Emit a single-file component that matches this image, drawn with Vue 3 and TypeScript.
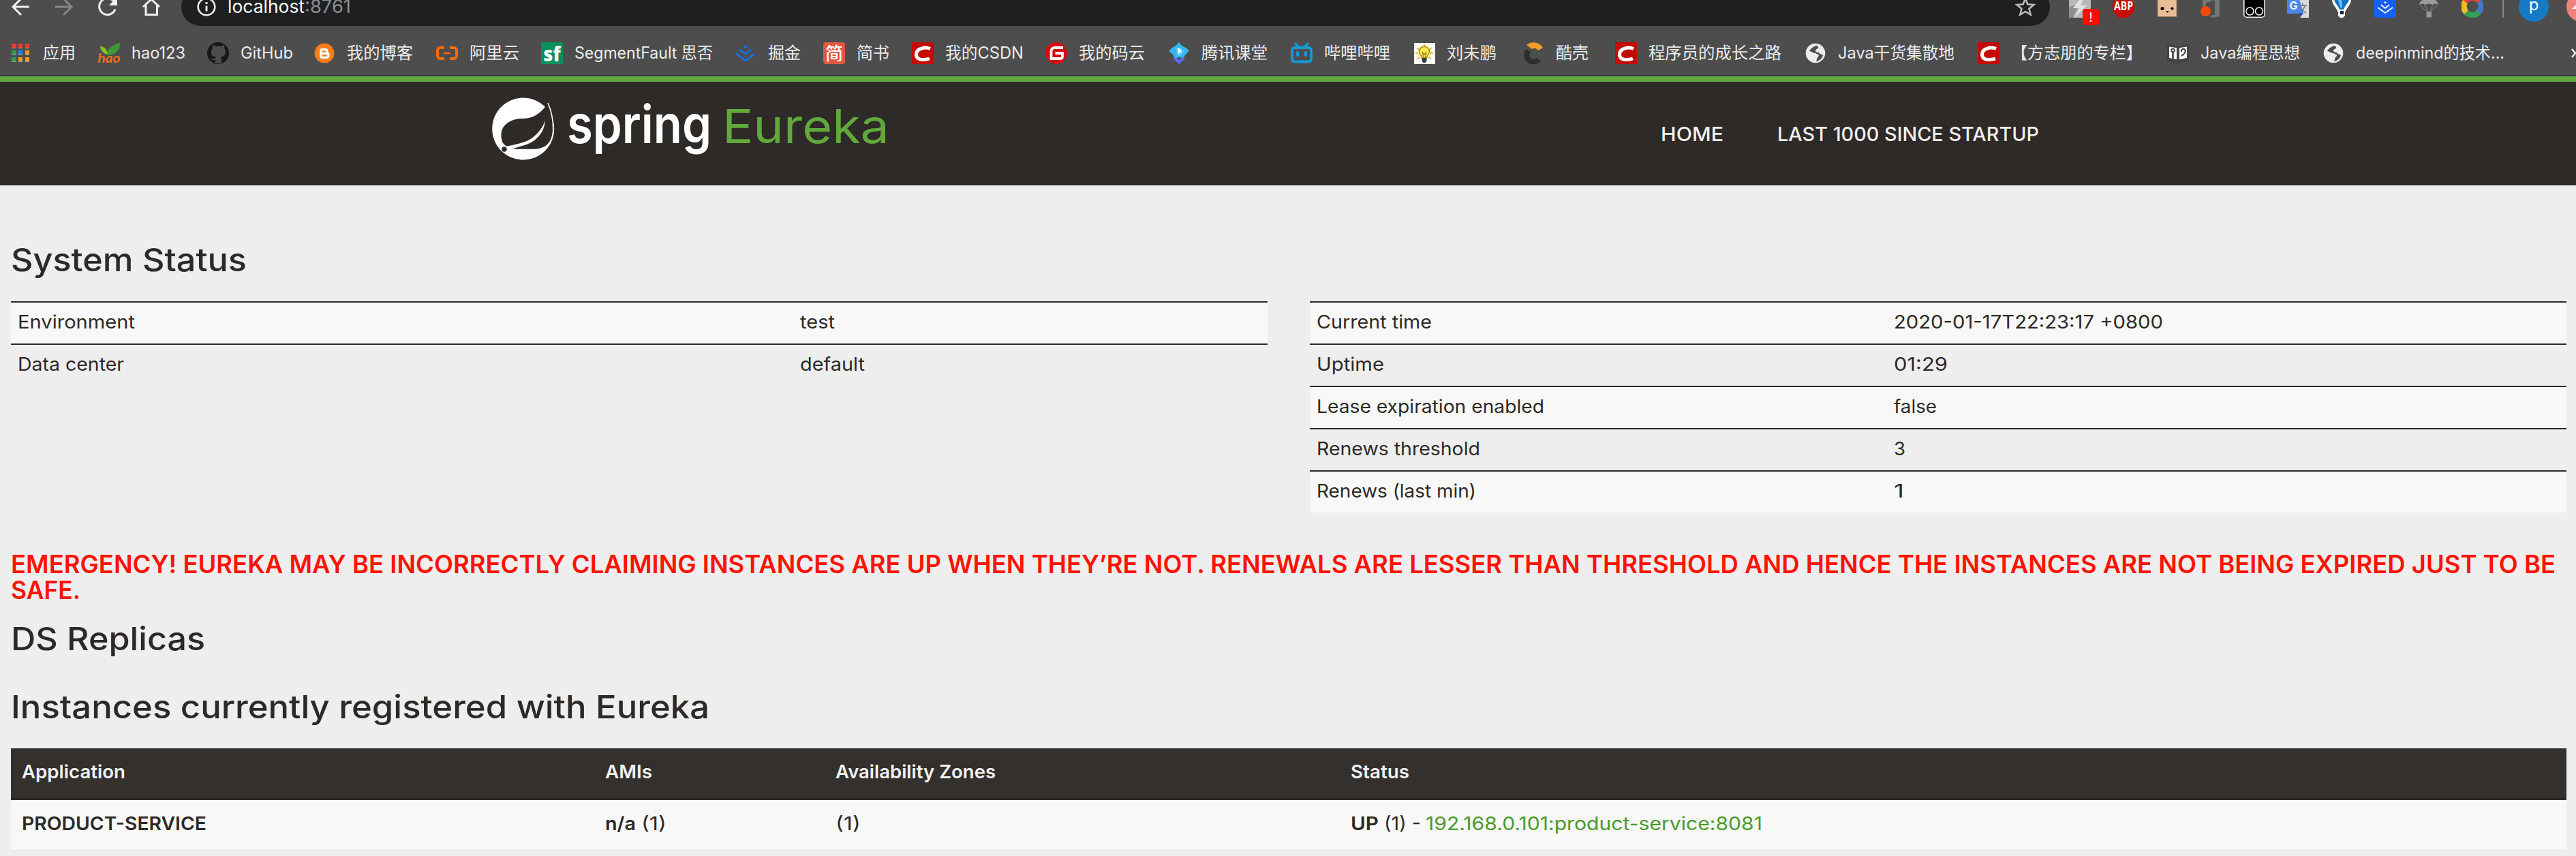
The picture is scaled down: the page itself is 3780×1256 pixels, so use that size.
<script setup lang="ts">
interface Bookmark {
  label: string
  icon: string
  slot: number
  text: number
}

interface Row {
  name: string
  value: string
  nameWidth: number
  valueWidth: number
}

// Stretches the letters of an element so that its text takes the given width.
const vFit = {
  mounted(el: HTMLElement, binding: { value: number }) {
    const natural = el.getBoundingClientRect().width
    el.style.width = `${binding.value}px`
    el.style.transformOrigin = 'left center'
    el.style.transform = `scaleX(${binding.value / natural})`
  },
}

const csdn =
  '<path fill="#c30c05" d="M0 0h32v32H0z"/><path d="M27 9.500C23 7.800 18 7.800 14.500 9 9 10.500 6.500 14 6.500 18c0 5 4 7.500 9.500 7.500 4 0 7-.5 10-1.500" fill="none" stroke="#fff" stroke-width="5"/>'
const globe =
  '<circle cx="16" cy="16" r="14.300" fill="#ececec"/><path d="M18 5c-5 1-9 4-11 8 3 0 5 3 8 3s3 2 5 2c2 1 1 3-1 4l-2 6c6-1 9-5 10-9-2-2-5-1-6-4-3 0-5-1-5-3 1-3 5-2 4-5z" fill="#4d4d4d"/>'

const icons: Record<string, string> = {
  apps:
    '<path fill="#9c9c9c" d="M3 8h7v1H3zm10 0h6v1h-6zm10 0h6v1h-6zM3 18h7v1H3zm10 0h6v1h-6zm10 0h6v1h-6zM3 28h7v1H3zm10 0h6v1h-6zm10 0h6v1h-6z"/><path fill="#f6352c" d="M3 2h7v6H3zm10 0h6v6h-6zm10 0h6v6h-6z"/><path fill="#2f9a52" d="M3 12h7v6H3zm0 10h7v6H3z"/><path fill="#2a83f5" d="M13 12h6v6h-6z"/><path fill="#f49a14" d="M23 12h6v6h-6zM13 22h6v6h-6zm10 0h6v6h-6z"/>',
  hao:
    '<path d="M3 6c6 0 11 5 11 12C8 17 4 13 3 6z" fill="#8cc21f"/><path d="M32 1c0 10-6 18-18 18C12 10 22 3 32 1z" fill="#3f9b35"/><text x="-.5" y="30" font-family="Lato" font-size="18" font-weight="700" font-style="italic" textLength="33" lengthAdjust="spacingAndGlyphs" fill="#ee6e1e">hao</text>',
  github:
    '<circle cx="16" cy="16" r="16" fill="#181616"/><path d="M12 31v-5c-4 1-6-1-7-3 3 0 4 2 7 1 0-1 .5-2 1-2-5-1-7-3-7-8 0-2 1-4 2-5-1-2 0-4 0-5 2 0 4 2 5 2a18 18 0 0 1 7 0c1 0 3-2 5-2 1 2 0 3 0 5 2 2 2 3 2 5 0 5-3 7-7 8 1 1 1 2 1 3v6z" fill="#4d4d4d"/>',
  blogger:
    '<circle cx="16" cy="16" r="14.500" fill="#f57d1a"/><path d="M13 9h4.500a4 4 0 0 1 4 4v1c0 1.500 2 1 2 3v3a4 4 0 0 1-4 4H13a4 4 0 0 1-4-4v-7a4 4 0 0 1 4-4z" fill="#fff"/><path d="M13.500 13.500H17m-3.500 6H19" stroke="#f57d1a" stroke-width="2.400" stroke-linecap="round"/>',
  aliyun:
    '<path d="M12 8H6a4 4 0 0 0-4 4v8a4 4 0 0 0 4 4h6M20 8h6a4 4 0 0 1 4 4v8a4 4 0 0 1-4 4h-6" fill="none" stroke="#ff6a00" stroke-width="4"/><path d="M11 16h10" stroke="#ff6a00" stroke-width="2.500"/>',
  sf:
    '<rect width="32" height="32" rx="1.500" fill="#0a8f5d"/><text x="3.500" y="27.500" font-family="Open Sans" font-size="30" font-weight="800" textLength="25" lengthAdjust="spacingAndGlyphs" fill="#fff">sf</text>',
  juejin:
    '<path d="M16 4l3 2.500L16 9l-3-2.500z" fill="#1270ff"/><path d="M8 11l8 6.500 8-6.500M2 16.500l14 10.500 14-10.500" fill="none" stroke="#1270ff" stroke-width="2.400"/>',
  jian:
    '<rect width="32" height="32" rx="4" fill="#e2583f"/><text x="16" y="26" text-anchor="middle" font-family="Noto Sans CJK SC" font-size="26" font-weight="500" fill="#fff">简</text>',
  csdn,
  gitee:
    '<circle cx="16" cy="16" r="16" fill="#d50a12"/><path d="M26 8H13.500A5 5 0 0 0 8.500 13v11h14a2.500 2.500 0 0 0 2.500-2.500V16H14.500" fill="none" stroke="#fff" stroke-width="3.800"/>',
  ke:
    '<path d="M8 20l8 6 8-6v5l-8 7-8-7z" fill="#5b6cf0"/><path d="M16 0l4 5 6 3 5 4-5 6-5 5-5-1-5 2-4-6-6-5 5-5 5-3z" fill="#32b8ee"/><path d="M12 8h6l5 5-5 7h-4z" fill="#5cd2ff"/><path d="M15 8l5 5-5 4z" fill="#fff"/>',
  bili:
    '<path d="M7 2l5 5M25 2l-5 5" stroke="#149ad8" stroke-width="3.400" stroke-linecap="round"/><rect x="2" y="8" width="28" height="20.500" rx="4" fill="none" stroke="#149ad8" stroke-width="3.800"/><path d="M10 15v4m12-4v4" stroke="#149ad8" stroke-width="4" stroke-linecap="round"/>',
  bulb:
    '<path fill="#fff" d="M1 1h31v31H1z"/><circle cx="16" cy="15" r="11" fill="#fff49a"/><path d="M16 3v4M5 8l4 3m18-3l-4 3M3 16h4m18 0h4M6 25l3-3m17 3l-3-3" stroke="#e89a2c" stroke-width="1.500"/><path d="M12.500 23c0-4-4-5-4-9a7.500 7.500 0 0 1 15 0c0 4-4 5-4 9z" fill="#f8ec4c" stroke="#8b6a20" stroke-width="1.200"/><path d="M13.500 15l2.500 3 2.500-3-1 8h-3z" fill="none" stroke="#a87518" stroke-width="1.200"/><path d="M12.500 23h7v5L16 31l-3.500-3z" fill="#31404a"/>',
  cool:
    '<path d="M5 10a13 13 0 1 0 22 17l-6-4a6 6 0 1 1-9-9z" fill="#2d2d2d"/><path d="M6 4c7-6 18-5 24 4l-7 4c-3-4-7-4-9-2z" fill="#f49b28"/>',
  globe,
  book:
    '<path d="M0 2l16 4 16-4v25l-16 5-16-5z" fill="#424242"/><path d="M3 6.500l11 1.800v17L3 23zM29 6.500L18 8.300v17L29 23z" fill="#fff"/><circle cx="8.500" cy="12" r="2.300" fill="none" stroke="#3c3c3c" stroke-width="1.800"/><path d="M8.500 14v11" stroke="#3c3c3c" stroke-width="2.500"/><path d="M21 14a3 3 0 1 1 5 1c-1 3-3 4-5 5" fill="none" stroke="#3c3c3c" stroke-width="2"/>',
  flash:
    '<path fill="#b8b8b8" d="M0 0h32v32H0z"/><path fill="#8e8e8e" d="M0 16l14-3-8 19H0z"/><path d="M18 2L6 18h9L8 32l18-18h-9l5-12z" fill="#e2e2e2"/>',
  abp:
    '<path d="M9.500 0h13L32 9.500v13L22.500 32h-13L0 22.500v-13z" fill="#c70d04"/><text x="2" y="20.500" font-family="Open Sans" font-size="17" font-weight="700" textLength="28" lengthAdjust="spacingAndGlyphs" fill="#fff">ABP</text>',
  danbo:
    '<path d="M2 0h28v30.500H2z" fill="#e9bd96" stroke="#9c7452"/><circle cx="9" cy="18.500" r="2.500"/><circle cx="23.500" cy="18.500" r="2"/><path d="M14.500 22h4l-2 3z"/>',
  office:
    '<path d="M4 6l13-5v7l-8 2v8H4zM18 0l11 2v28l-11 2-5-3 9-1V6l-4 1z" fill="#757575"/><circle cx="8.500" cy="22.500" r="7.500" fill="#f54a00"/>',
  eyes:
    '<rect x=".8" y="-4" width="30.400" height="35.200" rx="4" stroke="#f3f3f3" stroke-width="1.600"/><g fill="none" stroke="#eee" stroke-width="1.600"><circle cx="9.500" cy="22.500" r="5.500"/><circle cx="23" cy="22.500" r="5.500"/></g>',
  translate:
    '<path fill="#d8dadb" d="M12 6h20v26H19z"/><path d="M0 0h17l7 26H0z" fill="#4b86ee"/><path d="M17 25h7l-5 7z" fill="#2f4db8"/><path d="M18 14h11m-6-3v3m3 0c-1 5-4 8-6 9m0-6c2 4 5 6 8 8" fill="none" stroke="#617a85" stroke-width="1.600"/><text x="3.500" y="19.500" font-family="Inter" font-size="16" font-weight="600" fill="#fff">G</text>',
  balloon:
    '<path d="M16 -8a14 14 0 0 1 14 14c0 6-6 11-9 18v5l-3 3h-4l-3-3v-5C8 17 2 12 2 6A14 14 0 0 1 16-8z" fill="#fff"/><path d="M5 4h22c0 6-5 8-8 16h-6C10 12 5 10 5 4z" fill="#0e72c5"/><path d="M10 2h6l1 15h-3z" fill="#67c2fa"/><path d="M14 22h5v5h-5z" fill="#10243a"/>',
  gold:
    '<rect width="32" height="32" rx="3" fill="#1460ff"/><path d="M16 8l2 1.700-2 1.600-2-1.600z" fill="#fff"/><path d="M10 13l6 5 6-5M5 17l11 8 11-8" fill="none" stroke="#fff" stroke-width="1.800"/>',
  parachute:
    '<path d="M2 13C4 0 28 0 30 13c-3-2-6-2-8 0-4-2-8-2-12 0-2-2-5-2-8 0z" fill="#9b9b9b"/><path d="M3 13l11 11m15-11L18 24M10 13l5 11m7-11l-5 11" stroke="#858585"/><path fill="#989898" d="M12.500 23h7.500v8.500h-7.500z"/>',
  ring:
    '<g fill="none" stroke-width="8.500"><path d="M5.500 8.500A12 12 0 0 1 26 8" stroke="#e4453a"/><path d="M26 8a12 12 0 0 1-2 17" stroke="#4278c8"/><path d="M25 24a12 12 0 0 1-18 0" stroke="#35a051"/><path d="M7 24a12 12 0 0 1-1.500-15.500" stroke="#f3bd2c"/></g>',
}

const bookmarks: Bookmark[] = [
  { label: '应用', icon: 'apps', slot: 130, text: 48 },
  { label: 'hao123', icon: 'hao', slot: 160, text: 79 },
  { label: 'GitHub', icon: 'github', slot: 156, text: 77 },
  { label: '我的博客', icon: 'blogger', slot: 180, text: 97 },
  { label: '阿里云', icon: 'aliyun', slot: 154, text: 73 },
  { label: 'SegmentFault 思否', icon: 'sf', slot: 284, text: 203 },
  { label: '掘金', icon: 'juejin', slot: 130, text: 48 },
  { label: '简书', icon: 'jian', slot: 130, text: 48 },
  { label: '我的CSDN', icon: 'csdn', slot: 196, text: 115 },
  { label: '我的码云', icon: 'gitee', slot: 180, text: 97 },
  { label: '腾讯课堂', icon: 'ke', slot: 180, text: 97 },
  { label: '哔哩哔哩', icon: 'bili', slot: 180, text: 97 },
  { label: '刘未鹏', icon: 'bulb', slot: 160, text: 73 },
  { label: '酷壳', icon: 'cool', slot: 136, text: 48 },
  { label: '程序员的成长之路', icon: 'csdn', slot: 278, text: 195 },
  { label: 'Java干货集散地', icon: 'globe', slot: 254, text: 171 },
  { label: '【方志朋的专栏】', icon: 'csdn', slot: 278, text: 193 },
  { label: 'Java编程思想', icon: 'book', slot: 228, text: 146 },
  { label: 'deepinmind的技术...', icon: 'globe', slot: 364, text: 218 },
]

const extensions = ['flash', 'abp', 'danbo', 'office', 'eyes', 'translate', 'balloon', 'gold', 'parachute', 'ring']

const environment: Row[] = [
  { name: 'Environment', value: 'test', nameWidth: 172, valueWidth: 51 },
  { name: 'Data center', value: 'default', nameWidth: 156, valueWidth: 95 },
]

const runtime: Row[] = [
  { name: 'Current time', value: '2020-01-17T22:23:17 +0800', nameWidth: 169, valueWidth: 395 },
  { name: 'Uptime', value: '01:29', nameWidth: 99, valueWidth: 79 },
  { name: 'Lease expiration enabled', value: 'false', nameWidth: 334, valueWidth: 63 },
  { name: 'Renews threshold', value: '3', nameWidth: 240, valueWidth: 17 },
  { name: 'Renews (last min)', value: '1', nameWidth: 234, valueWidth: 15 },
]
</script>

<template>
  <div class="screen">
    <div class="chrome">
      <div class="toolbar">
        <svg class="nav-icons" width="252" height="38" viewBox="0 0 252 38" fill="none" stroke="#efefef" stroke-width="3">
          <path d="M43 10H19M31 -2L19 10l12 12" />
          <path d="M81 10h24M93 -2l12 12-12 12" stroke="#888" />
          <path d="M169 13.500A12 12 0 1 1 167 2" />
          <path d="M172 -5V8h-12z" fill="#efefef" stroke="none" />
          <path d="M210 10L222 -1l12 11M214 7.500V21.500h16.500V7.500" />
        </svg>
        <div class="omnibox">
          <svg width="28" height="28" viewBox="0 0 28 28" fill="none" stroke="#efefef" stroke-width="2.600">
            <circle cx="14" cy="14" r="12.300" />
            <path d="M14 12.500v8M14 7v3" stroke-width="3" />
          </svg>
          <span class="url"><span v-fit="113">localhost</span><span v-fit="68" class="port">:8761</span></span>
          <svg class="star" width="32" height="32" viewBox="0 0 32 32" fill="none" stroke="#b9babc" stroke-width="2.600">
            <path d="M16 4l3.400 8.300 9 .7-6.900 5.800 2.200 8.800L16 22.900l-7.700 4.700 2.200-8.800L3.600 13l9-.7z" />
          </svg>
        </div>
        <div class="extensions">
          <span v-for="name in extensions" :key="name" class="extension">
            <svg width="32" height="32" viewBox="0 0 32 32" v-html="icons[name]"></svg>
            <span v-if="name === 'flash'" class="badge">!</span>
          </span>
        </div>
        <div class="divider"></div>
        <div class="avatar">p</div>
        <div class="update">
          <svg width="44" height="44" viewBox="0 0 44 44">
            <circle cx="22" cy="22" r="22" fill="#f1827b" />
            <path d="M22 12L8 25h8v9h12v-9h8z" fill="#fff" />
          </svg>
        </div>
      </div>
      <div class="bookmarks">
        <div v-for="item in bookmarks" :key="item.label" class="bookmark" :style="{ width: item.slot + 'px' }">
          <svg width="32" height="32" viewBox="0 0 32 32" v-html="icons[item.icon]"></svg>
          <span v-fit="item.text">{{ item.label }}</span>
        </div>
        <svg class="more" width="18" height="16" viewBox="0 0 18 16" fill="none" stroke="#ececec" stroke-width="2.400">
          <path d="M1 2l5 6-5 6M9 2l5 6-5 6" />
        </svg>
      </div>
    </div>

    <header class="header">
      <svg class="logo" width="640" height="152" viewBox="0 0 640 152">
        <circle cx="67.700" cy="69" r="45.500" fill="#fff" />
        <path
          d="M104 31C110 45 112.500 58 111.500 74C110 90 101 99.500 82 99.500H50L42.500 94C37 91 35 84 35.500 76C37 62 51 54 66 54C82 54 94 47 104 31Z"
          fill="#2e2a27"
        />
        <path
          d="M104 31C110 45 112.500 58 111.500 74C110 90 101 99.500 82 99.500H50"
          fill="none"
          stroke="#fff"
          stroke-width="1.600"
        />
        <path d="M100 57C99 72 89 86 74 91.500C66 94.500 57 96 49 100L42 95C58 91 70 90 80 83C91 75 96 67 100 57Z" fill="#fff" />
        <circle cx="40" cy="99" r="3.700" fill="#2e2a27" />
        <text x="132" y="89.500" class="spring" textLength="212" lengthAdjust="spacingAndGlyphs">spring</text>
        <text x="360" y="90" class="eureka" textLength="245" lengthAdjust="spacingAndGlyphs">Eureka</text>
      </svg>
      <nav class="menu">
        <a v-fit="92">HOME</a>
        <a v-fit="384">LAST 1000 SINCE STARTUP</a>
      </nav>
    </header>

    <main class="content">
      <h1 class="first"><span v-fit="346">System Status</span></h1>
      <div class="tables">
        <div class="table wide">
          <div v-for="row in environment" :key="row.name" class="row">
            <div class="name"><span v-fit="row.nameWidth">{{ row.name }}</span></div>
            <div><span v-fit="row.valueWidth">{{ row.value }}</span></div>
          </div>
        </div>
        <div class="table">
          <div v-for="row in runtime" :key="row.name" class="row">
            <div class="name"><span v-fit="row.nameWidth">{{ row.name }}</span></div>
            <div><span v-fit="row.valueWidth">{{ row.value }}</span></div>
          </div>
        </div>
      </div>

      <h4 class="emergency">
        <span v-fit="3734">EMERGENCY! EUREKA MAY BE INCORRECTLY CLAIMING INSTANCES ARE UP WHEN THEY’RE NOT. RENEWALS ARE LESSER THAN THRESHOLD AND HENCE THE INSTANCES ARE NOT BEING EXPIRED JUST TO BE</span><br />
        <span v-fit="102">SAFE.</span>
      </h4>

      <h1 class="replicas"><span v-fit="285">DS Replicas</span></h1>
      <h1 class="registered"><span v-fit="1025">Instances currently registered with Eureka</span></h1>

      <div class="instances">
        <div class="instance head">
          <div><b v-fit="152">Application</b></div>
          <div><b v-fit="69">AMIs</b></div>
          <div><b v-fit="235">Availability Zones</b></div>
          <div><b v-fit="86">Status</b></div>
        </div>
        <div class="instance">
          <div><b v-fit="271">PRODUCT-SERVICE</b></div>
          <div><b v-fit="45">n/a</b> <span v-fit="37">(1)</span></div>
          <div><span v-fit="37">(1)</span></div>
          <div><b v-fit="41">UP</b> <span v-fit="54">(1) -</span> <a v-fit="494">192.168.0.101:product-service:8081</a></div>
        </div>
      </div>
    </main>
  </div>
</template>

<style>
body {
  background: #eee;
  overflow: hidden;
}
</style>

<style scoped>
.screen {
  width: 3780px;
  height: 1256px;
  overflow: hidden;
  background: #eee;
  color: #2d2926;
  font-family: Inter, 'Noto Sans CJK SC', sans-serif;
  font-size: 27px;
  white-space: nowrap;
}

.screen span,
.screen b,
.menu a,
.instance a {
  display: inline-block;
}

.chrome {
  height: 110px;
  border-bottom: 2px solid #38383a;
  background: #4d4d4d;
  color: #ececec;
}

.toolbar {
  display: flex;
  height: 38px;
}

.toolbar > * {
  flex: none;
}

.nav-icons {
  margin-right: 14px;
}

.omnibox {
  display: flex;
  align-items: center;
  box-sizing: border-box;
  width: 2742px;
  height: 56px;
  margin-top: -18px;
  padding: 0 20px 0 23px;
  border-radius: 28px;
  background: #1e1f21;
}

.url {
  margin-left: 17px;
  color: #fff;
  font-size: 27px;
  line-height: 32px;
}

.port {
  color: #8d8f92;
}

.star {
  margin-left: auto;
}

.extensions {
  display: flex;
  gap: 32px;
  margin: -6px 0 0 28px;
}

.extension {
  position: relative;
  width: 32px;
  height: 32px;
}

.extension svg {
  display: block;
}

.badge {
  position: absolute;
  top: 19px;
  left: 20px;
  width: 24px;
  height: 24px;
  border-radius: 4px;
  background: #ff0d00;
  color: #fff;
  font-size: 18px;
  line-height: 26px;
  text-align: center;
}

.divider {
  width: 2px;
  height: 26px;
  margin: 0 22px 0 28px;
  background: #858585;
}

.avatar {
  width: 44px;
  height: 44px;
  margin-top: -12px;
  border-radius: 50%;
  background: #147ac8;
  color: #fff;
  font-size: 24px;
  line-height: 38px;
  text-align: center;
}

.update {
  margin: -12px 0 0 26px;
}

.bookmarks {
  display: flex;
  align-items: center;
  height: 32px;
  padding: 24px 0 0 14px;
  font-size: 24px;
  line-height: 32px;
}

.bookmark {
  display: flex;
  flex: none;
  gap: 17px;
}

.bookmark svg {
  flex: none;
}

.more {
  flex: none;
  margin-left: 1px;
}

.header {
  display: flex;
  align-items: center;
  box-sizing: border-box;
  height: 160px;
  border-top: 8px solid #62a93d;
  background: #2e2a27;
}

.logo {
  flex: none;
  margin-left: 700px;
}

.spring {
  fill: #fff;
  font-size: 77px;
  font-weight: 600;
}

.eureka {
  fill: #62a93d;
  font-size: 69px;
}

.menu {
  display: flex;
  gap: 79px;
  margin-left: 1097px;
  padding-top: 2px;
  color: #efefef;
  font-size: 28px;
  font-weight: 500;
}

.content {
  width: 3750px;
  padding: 83px 14px 0 16px;
}

h1 {
  margin: 0;
  font-size: 47px;
  font-weight: 500;
  line-height: 52px;
}

.tables {
  display: flex;
  align-items: flex-start;
  gap: 62px;
  height: 310px;
  margin-top: 35px;
}

.table {
  width: 1844px;
}

.row {
  display: flex;
  box-sizing: border-box;
  height: 62px;
  padding-left: 10px;
  border-top: 2px solid #2d2926;
  line-height: 58px;
}

.row:nth-child(odd) {
  background: #f8f8f8;
}

.name {
  width: 847px;
}

.wide .name {
  width: 1148px;
}

.emergency {
  margin: 57px 0 26px;
  color: #ff1300;
  font-size: 37px;
  font-weight: 600;
  line-height: 38px;
}

.registered {
  margin-top: 48px;
}

.instances {
  margin-top: 35px;
}

.instance {
  display: grid;
  grid-template-columns: 856px 338px 756px 1fr;
  height: 72px;
  padding-left: 16px;
  background: #f8f8f8;
  line-height: 70px;
}

.instance b {
  font-weight: 600;
}

.head {
  border-bottom: 4px solid #2d2825;
  background: #34302d;
  color: #f1f1f1;
}

.instance a {
  color: #4b992d;
}
</style>
